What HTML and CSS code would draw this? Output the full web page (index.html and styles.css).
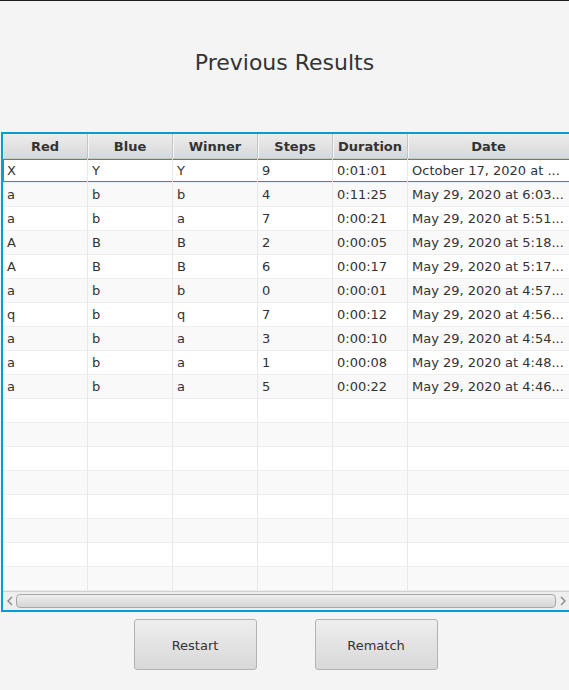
FILE: index.html
```html
<!DOCTYPE html>
<html>
<head>
<meta charset="utf-8">
<link rel="stylesheet" href="styles.css">
</head>
<body>
<div class="window">
  <h1 class="title">Previous Results</h1>
  <div class="table">
    <div class="row header">
      <div class="c c1">Red</div><div class="c c2">Blue</div><div class="c c3">Winner</div><div class="c c4">Steps</div><div class="c c5">Duration</div><div class="c c6">Date</div>
    </div>
    <div class="body">
      <div class="row odd focused"><div class="c c1">X</div><div class="c c2">Y</div><div class="c c3">Y</div><div class="c c4">9</div><div class="c c5">0:01:01</div><div class="c c6">October 17, 2020 at ...</div></div>
      <div class="row even"><div class="c c1">a</div><div class="c c2">b</div><div class="c c3">b</div><div class="c c4">4</div><div class="c c5">0:11:25</div><div class="c c6">May 29, 2020 at 6:03...</div></div>
      <div class="row odd"><div class="c c1">a</div><div class="c c2">b</div><div class="c c3">a</div><div class="c c4">7</div><div class="c c5">0:00:21</div><div class="c c6">May 29, 2020 at 5:51...</div></div>
      <div class="row even"><div class="c c1">A</div><div class="c c2">B</div><div class="c c3">B</div><div class="c c4">2</div><div class="c c5">0:00:05</div><div class="c c6">May 29, 2020 at 5:18...</div></div>
      <div class="row odd"><div class="c c1">A</div><div class="c c2">B</div><div class="c c3">B</div><div class="c c4">6</div><div class="c c5">0:00:17</div><div class="c c6">May 29, 2020 at 5:17...</div></div>
      <div class="row even"><div class="c c1">a</div><div class="c c2">b</div><div class="c c3">b</div><div class="c c4">0</div><div class="c c5">0:00:01</div><div class="c c6">May 29, 2020 at 4:57...</div></div>
      <div class="row odd"><div class="c c1">q</div><div class="c c2">b</div><div class="c c3">q</div><div class="c c4">7</div><div class="c c5">0:00:12</div><div class="c c6">May 29, 2020 at 4:56...</div></div>
      <div class="row even"><div class="c c1">a</div><div class="c c2">b</div><div class="c c3">a</div><div class="c c4">3</div><div class="c c5">0:00:10</div><div class="c c6">May 29, 2020 at 4:54...</div></div>
      <div class="row odd"><div class="c c1">a</div><div class="c c2">b</div><div class="c c3">a</div><div class="c c4">1</div><div class="c c5">0:00:08</div><div class="c c6">May 29, 2020 at 4:48...</div></div>
      <div class="row even"><div class="c c1">a</div><div class="c c2">b</div><div class="c c3">a</div><div class="c c4">5</div><div class="c c5">0:00:22</div><div class="c c6">May 29, 2020 at 4:46...</div></div>
      <div class="row odd"><div class="c c1"></div><div class="c c2"></div><div class="c c3"></div><div class="c c4"></div><div class="c c5"></div><div class="c c6"></div></div>
      <div class="row even"><div class="c c1"></div><div class="c c2"></div><div class="c c3"></div><div class="c c4"></div><div class="c c5"></div><div class="c c6"></div></div>
      <div class="row odd"><div class="c c1"></div><div class="c c2"></div><div class="c c3"></div><div class="c c4"></div><div class="c c5"></div><div class="c c6"></div></div>
      <div class="row even"><div class="c c1"></div><div class="c c2"></div><div class="c c3"></div><div class="c c4"></div><div class="c c5"></div><div class="c c6"></div></div>
      <div class="row odd"><div class="c c1"></div><div class="c c2"></div><div class="c c3"></div><div class="c c4"></div><div class="c c5"></div><div class="c c6"></div></div>
      <div class="row even"><div class="c c1"></div><div class="c c2"></div><div class="c c3"></div><div class="c c4"></div><div class="c c5"></div><div class="c c6"></div></div>
      <div class="row odd"><div class="c c1"></div><div class="c c2"></div><div class="c c3"></div><div class="c c4"></div><div class="c c5"></div><div class="c c6"></div></div>
      <div class="row even"><div class="c c1"></div><div class="c c2"></div><div class="c c3"></div><div class="c c4"></div><div class="c c5"></div><div class="c c6"></div></div>
    </div>
    <div class="hscroll">
      <span class="arrow">
        <svg width="8" height="10" viewBox="0 0 8 10"><path d="M6 1 L2 5 L6 9" fill="none" stroke="#888" stroke-width="1.4"/></svg>
      </span>
      <div class="track"><div class="thumb"></div></div>
      <span class="arrow">
        <svg width="8" height="10" viewBox="0 0 8 10"><path d="M2 1 L6 5 L2 9" fill="none" stroke="#888" stroke-width="1.4"/></svg>
      </span>
    </div>
  </div>
  <div class="buttons">
    <button class="btn">Restart</button>
    <button class="btn">Rematch</button>
  </div>
</div>
</body>
</html>
```
FILE: styles.css
```css
html, body {
  margin: 0;
  padding: 0;
  background: #f4f4f4;
  overflow: hidden;
}
body {
  width: 569px;
  height: 690px;
  font-family: "DejaVu Sans", sans-serif;
  color: #333;
}
.window {
  border-top: 1px solid #1e1e1e;
  height: 689px;
  display: flex;
  flex-direction: column;
}
.title {
  margin: 49px 0 0 0;
  height: 26px;
  line-height: 26px;
  font-size: 22px;
  font-weight: normal;
  text-align: center;
  color: #333;
}
.table {
  margin: 56px 0 0 1px;
  width: 570px;
  border: 2px solid #039ed3;
  border-right: none;
  background: #f4f4f4;
  display: flex;
  flex-direction: column;
  overflow: hidden;
}
.row {
  display: flex;
  height: 24px;
  box-sizing: border-box;
}
.c {
  flex: none;
  box-sizing: border-box;
  height: 100%;
  border-right: 1px solid #e8e8e8;
  padding-left: 4px;
  font-size: 13px;
  line-height: 24px;
  white-space: nowrap;
  overflow: hidden;
}
.c1, .c2, .c3 { width: 85px; }
.c4, .c5 { width: 75px; }
.c6 { width: 162px; }
.header {
  height: 25px;
  background: linear-gradient(#ececec, #d8d8d8);
  border-bottom: 1px solid #c8c8c8;
}
.header .c {
  border-right: 1px solid #c4c4c4;
  box-shadow: inset 1px 0 0 #f6f6f6;
  text-align: center;
  font-weight: bold;
  padding-left: 0;
  line-height: 25px;
  color: #333;
}
.body .row {
  border-bottom: 1px solid #eeeeee;
}
.odd { background: #ffffff; }
.even { background: #f9f9f9; }
.row.focused {
  box-shadow: inset 0 0 0 1px #039ed3;
}
.hscroll {
  height: 18px;
  display: flex;
  align-items: center;
  background: #eeeeee;
  border-top: 1px solid #d0d0d0;
}
.arrow {
  width: 13px;
  display: flex;
  justify-content: center;
  align-items: center;
}
.track {
  width: 540px;
  height: 14px;
}
.thumb {
  height: 12px;
  border: 1px solid #a8a8a8;
  border-radius: 4px;
  background: linear-gradient(#eeeeee, #d6d6d6);
}
.buttons {
  display: flex;
  justify-content: center;
  gap: 58px;
  margin-top: 7px;
  padding-left: 2px;
}
.btn {
  width: 123px;
  height: 51px;
  border: 1px solid #b2b2b2;
  border-radius: 3px;
  background: linear-gradient(#eeeeee, #d8d8d8);
  font-family: "DejaVu Sans", sans-serif;
  font-size: 13px;
  line-height: 16px;
  padding: 2px 0 0 0;
  color: #333;
}
```
